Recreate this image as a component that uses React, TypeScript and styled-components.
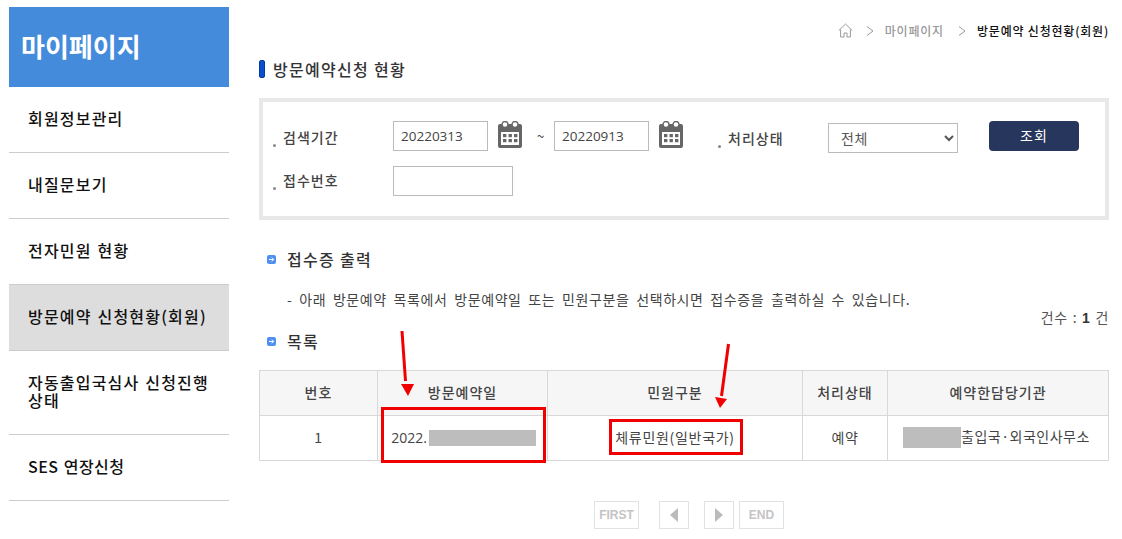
import styled, { createGlobalStyle } from "styled-components";

const GlobalStyle = createGlobalStyle`
  html, body {
    margin: 0;
    padding: 0;
    background: #fff;
    overflow: hidden;
  }
  body {
    font-family: "Noto Sans CJK KR", "Liberation Sans", sans-serif;
    color: #333;
  }
  * { box-sizing: border-box; }
`;

const Page = styled.div`
  position: relative;
  width: 1122px;
  height: 539px;
  display: flex;
  align-items: flex-start;
  padding: 7px 13px 0 9px;
  overflow: hidden;
`;

const Sidebar = styled.aside`
  width: 220px;
  flex: none;
  margin-right: 30px;
`;

const SideTitle = styled.h1`
  margin: 0;
  height: 80px;
  background: #458bdc;
  color: #fff;
  font-size: 26px;
  font-weight: 700;
  line-height: 78px;
  padding-left: 12px;
`;

const SideItem = styled.div<{ $active?: boolean; $tall?: boolean; $tight?: boolean }>`
  height: ${(p) => (p.$tall ? "84px" : "66px")};
  display: flex;
  align-items: center;
  padding: 0 19px 4px;
  border-bottom: 1px solid #ccc;
  background: ${(p) => (p.$active ? "#dddddd" : "#fff")};
  color: #111;
  font-size: 16px;
  font-weight: 500;
  line-height: 18px;
  letter-spacing: ${(p) => (p.$tight ? "0.5px" : "1.2px")};
  word-spacing: 1px;
`;

const Main = styled.main`
  flex: 1;
  min-width: 0;
`;

const Crumbs = styled.nav`
  height: 48px;
  padding-top: 15px;
  display: flex;
  justify-content: flex-end;
  align-items: flex-start;
  font-size: 12px;
  line-height: 18px;
  letter-spacing: 0.8px;
`;

const CrumbLink = styled.span`
  color: #999;
  font-weight: 500;
  margin-right: 14px;
`;

const CrumbNow = styled.span`
  color: #111;
  font-weight: 500;
`;

const CrumbArrow = styled.svg`
  width: 8px;
  height: 10px;
  margin: 4px 11px 0 0;
  fill: none;
  stroke: #999;
`;

const HomeIcon = styled.svg`
  width: 15px;
  height: 15px;
  margin: 1px 13px 0 0;
  fill: none;
  stroke: #999;
`;

const PageTitle = styled.h2`
  margin: 0;
  height: 43px;
  display: flex;
  align-items: center;
  gap: 8px;
  font-size: 16px;
  font-weight: 500;
  line-height: 30px;
  letter-spacing: 1.3px;
  color: #333;
  padding: 0 0 16px;
`;

const TitleMark = styled.span`
  width: 6px;
  height: 18px;
  border-radius: 2px;
  background: #0a4fd0;
  border: 1px solid #063a9e;
`;

const SearchBox = styled.section`
  height: 122px;
  border: 4px solid #e8e8e8;
  padding: 19px 0 0 9px;
  display: flex;
  flex-direction: column;
  gap: 15px;
`;

const SearchRow = styled.div`
  display: flex;
  align-items: flex-start;
  height: 30px;
`;

const Label = styled.label<{ $width: number; $lead?: number; $nudge: number }>`
  width: ${(p) => p.$width}px;
  margin-left: ${(p) => p.$lead ?? 0}px;
  margin-top: ${(p) => p.$nudge}px;
  flex: none;
  display: flex;
  align-items: baseline;
  gap: 8px;
  font-size: 14px;
  font-weight: 500;
  line-height: 30px;
  letter-spacing: 1px;
  color: #444;
`;

const Dot = styled.i`
  width: 3px;
  height: 3px;
  border-radius: 50%;
  background: #888;
  flex: none;
  transform: translateX(1px) translateY(4px);
`;

const TextInput = styled.input<{ $width: number }>`
  width: ${(p) => p.$width}px;
  height: 30px;
  flex: none;
  border: 1px solid #bbb;
  padding: 0 7px;
  font-family: "Open Sans", sans-serif;
  font-size: 13.5px;
  color: #444;
  background: #fff;
  outline: none;
`;

const CalendarIcon = styled.svg`
  width: 24px;
  height: 27px;
  margin-left: 10px;
  flex: none;
`;

const Tilde = styled.span`
  width: 32px;
  flex: none;
  padding-left: 5px;
  text-align: center;
  font-size: 13px;
  line-height: 29px;
  color: #444;
`;

const Select = styled.select`
  width: 130px;
  height: 30px;
  flex: none;
  margin-top: 2px;
  border: 1px solid #bbb;
  background: #fff;
  padding-left: 8px;
  font-family: inherit;
  font-size: 14px;
  letter-spacing: 0.5px;
  color: #555;
  outline: none;
`;

const SearchButton = styled.button`
  width: 90px;
  height: 30px;
  flex: none;
  margin-left: 31px;
  border: 0;
  border-radius: 4px;
  background: #27365c;
  color: #fff;
  font-family: inherit;
  font-size: 14px;
  letter-spacing: 1px;
  padding: 0 0 2px;
`;

const SectionHead = styled.h3<{ $top: number }>`
  margin: ${(p) => p.$top}px 0 0;
  height: 24px;
  display: flex;
  align-items: center;
  gap: 11px;
  padding-left: 8px;
  font-size: 16px;
  font-weight: 500;
  line-height: 24px;
  letter-spacing: 1.3px;
  color: #333;
`;

const BulletIcon = styled.svg`
  width: 9px;
  height: 9px;
  flex: none;
`;

const Note = styled.p`
  margin: 18px 0 0;
  padding-left: 28px;
  font-size: 14px;
  line-height: 20px;
  letter-spacing: 0.6px;
  word-spacing: 3px;
  color: #444;
  white-space: nowrap;
`;

const CountLine = styled.div`
  margin-top: -1px;
  height: 18px;
  text-align: right;
  font-size: 14px;
  line-height: 18px;
  letter-spacing: 0.7px;
  word-spacing: 1px;
  color: #555;

  & b {
    color: #333;
    font-family: "Liberation Sans", sans-serif;
  }
`;

const Table = styled.table`
  width: 849px;
  margin-top: 17px;
  border-collapse: collapse;
  table-layout: fixed;
`;

const Th = styled.th<{ $width: number }>`
  width: ${(p) => p.$width}px;
  height: 45px;
  padding: 0 0 2px;
  border: 1px solid #d8d8d8;
  background: #f6f6f6;
  font-size: 14px;
  font-weight: 500;
  letter-spacing: 1px;
  color: #444;
`;

const Td = styled.td`
  height: 45px;
  padding: 0 0 2px;
  border: 1px solid #d8d8d8;
  text-align: center;
  font-size: 14px;
  letter-spacing: 0.7px;
  color: #444;
`;

const OfficeTd = styled(Td)`
  padding-right: 3px;
  letter-spacing: 0.5px;
`;

const DateText = styled.span`
  display: inline-flex;
  align-items: center;
  gap: 2px;
  padding-left: 2px;
  letter-spacing: 0;
  font-family: "Open Sans", "Noto Sans CJK KR", sans-serif;
`;

const Blur = styled.span<{ $width: number; $height: number }>`
  display: inline-block;
  width: ${(p) => p.$width}px;
  height: ${(p) => p.$height}px;
  background: #bdbdbd;
  vertical-align: middle;
`;

const Pager = styled.div`
  margin-top: 40px;
  display: flex;
  padding-left: 335px;
`;

const PageBtn = styled.span<{ $width: number; $gap: number }>`
  width: ${(p) => p.$width}px;
  height: 28px;
  margin-right: ${(p) => p.$gap}px;
  display: flex;
  align-items: center;
  justify-content: center;
  border: 1px solid #e2e2e2;
  color: #c4c4c4;
  font-family: "Liberation Sans", sans-serif;
  font-size: 12px;
  font-weight: 700;
`;

const PageTriangle = styled.svg`
  width: 8px;
  height: 14px;
  fill: #bbb;
`;

const Annotation = styled.div<{ $x: number; $y: number; $w: number; $h: number }>`
  position: absolute;
  left: ${(p) => p.$x}px;
  top: ${(p) => p.$y}px;
  width: ${(p) => p.$w}px;
  height: ${(p) => p.$h}px;
  border: 3px solid #f00000;
`;

const ArrowLayer = styled.svg`
  position: absolute;
  left: 0;
  top: 0;
  width: 1122px;
  height: 539px;
  pointer-events: none;
`;

const Calendar = () => (
  <CalendarIcon viewBox="0 0 24 27">
    <rect x="0" y="3" width="24" height="24" rx="2" fill="#666" />
    <rect x="3" y="11" width="18" height="13" fill="#fff" />
    <circle cx="7" cy="3.5" r="3" fill="#fff" stroke="#666" strokeWidth="1.4" />
    <circle cx="17" cy="3.5" r="3" fill="#fff" stroke="#666" strokeWidth="1.4" />
    {[5, 10.5, 16].map((x) =>
      [13, 18].map((y) => (
        <rect key={`${x}-${y}`} x={x} y={y} width="3.4" height="3.2" fill="#666" />
      ))
    )}
  </CalendarIcon>
);

const Bullet = () => (
  <BulletIcon viewBox="0 0 9 9">
    <rect width="9" height="9" rx="2" fill="#4f8ff0" />
    <path d="M2 4.5h4.5M4.8 2.6l1.900 1.900-1.900 1.900" stroke="#fff" strokeWidth="1" fill="none" />
  </BulletIcon>
);

const Chevron = () => (
  <CrumbArrow viewBox="0 0 8 10">
    <path d="M1 0.5l6 4.500-6 4.500" />
  </CrumbArrow>
);

const menu = ["회원정보관리", "내질문보기", "전자민원 현황"];

export default function App() {
  return (
    <Page>
      <GlobalStyle />
      <Sidebar>
        <SideTitle>마이페이지</SideTitle>
        {menu.map((m) => (
          <SideItem key={m}>{m}</SideItem>
        ))}
        <SideItem $active>방문예약 신청현황(회원)</SideItem>
        <SideItem $tall>자동출입국심사 신청진행상태</SideItem>
        <SideItem $tight>SES 연장신청</SideItem>
      </Sidebar>

      <Main>
        <Crumbs>
          <HomeIcon viewBox="0 0 15 15">
            <path d="M0.8 7.5L7.5 1l6.700 6.500M2.600 6.500v7.500h3.400v-4h3v4h3.400V6.500" />
          </HomeIcon>
          <Chevron />
          <CrumbLink>마이페이지</CrumbLink>
          <Chevron />
          <CrumbNow>방문예약 신청현황(회원)</CrumbNow>
        </Crumbs>

        <PageTitle>
          <TitleMark />
          방문예약신청 현황
        </PageTitle>

        <SearchBox>
          <SearchRow>
            <Label $width={121} $nudge={1}>
              <Dot />
              검색기간
            </Label>
            <TextInput $width={95} defaultValue="20220313" />
            <Calendar />
            <Tilde>~</Tilde>
            <TextInput $width={95} defaultValue="20220913" />
            <Calendar />
            <Label $width={111} $lead={34} $nudge={2}>
              <Dot />
              처리상태
            </Label>
            <Select defaultValue="전체">
              <option>전체</option>
            </Select>
            <SearchButton>조회</SearchButton>
          </SearchRow>
          <SearchRow>
            <Label $width={121} $nudge={-1}>
              <Dot />
              접수번호
            </Label>
            <TextInput $width={120} />
          </SearchRow>
        </SearchBox>

        <SectionHead $top={27}>
          <Bullet />
          접수증 출력
        </SectionHead>
        <Note>- 아래 방문예약 목록에서 방문예약일 또는 민원구분을 선택하시면 접수증을 출력하실 수 있습니다.</Note>
        <CountLine>
          건수 : <b>1</b> 건
        </CountLine>
        <SectionHead $top={3}>
          <Bullet />
          목록
        </SectionHead>

        <Table>
          <thead>
            <tr>
              <Th $width={118}>번호</Th>
              <Th $width={170}>방문예약일</Th>
              <Th $width={255}>민원구분</Th>
              <Th $width={85}>처리상태</Th>
              <Th $width={221}>예약한담당기관</Th>
            </tr>
          </thead>
          <tbody>
            <tr>
              <Td>1</Td>
              <Td>
                <DateText>
                  2022. <Blur $width={107} $height={16} />
                </DateText>
              </Td>
              <Td>체류민원(일반국가)</Td>
              <Td>예약</Td>
              <OfficeTd>
                <Blur $width={58} $height={21} />
                출입국·외국인사무소
              </OfficeTd>
            </tr>
          </tbody>
        </Table>

        <Pager>
          <PageBtn $width={45} $gap={20}>FIRST</PageBtn>
          <PageBtn $width={30} $gap={15}>
            <PageTriangle viewBox="0 0 8 14"><path d="M8 0v14L0 7z" /></PageTriangle>
          </PageBtn>
          <PageBtn $width={30} $gap={5}>
            <PageTriangle viewBox="0 0 8 14"><path d="M0 0v14l8-7z" /></PageTriangle>
          </PageBtn>
          <PageBtn $width={45} $gap={0}>END</PageBtn>
        </Pager>
      </Main>

      <Annotation $x={381} $y={407} $w={165} $h={56} />
      <Annotation $x={609} $y={419} $w={134} $h={36} />
      <ArrowLayer viewBox="0 0 1122 539">
        <path d="M402 331l3.500 50" stroke="#f00000" strokeWidth="3" fill="none" />
        <path d="M401 384h13l-6 12z" fill="#f00000" />
        <path d="M728.500 344l-7 52" stroke="#f00000" strokeWidth="3" fill="none" />
        <path d="M715 397l12 2-7 9z" fill="#f00000" />
      </ArrowLayer>
    </Page>
  );
}
